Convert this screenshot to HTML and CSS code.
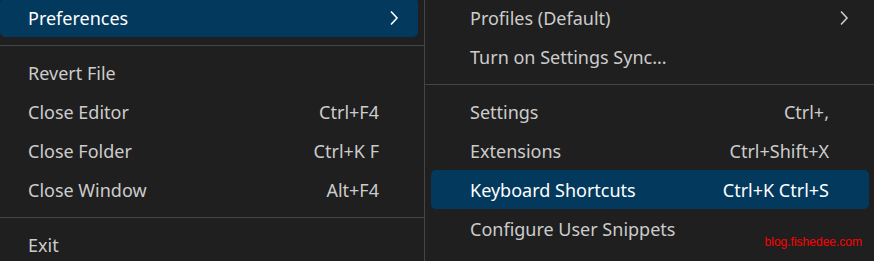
FILE: index.html
```html
<!DOCTYPE html>
<html lang="en">
<head>
    <meta charset="UTF-8">
    <title>Menu</title>
    <link rel="stylesheet" href="styles.css">
</head>
<body>
    <div class="menu menu-left">
        <div class="menu-item active">
            <span>Preferences</span>
            <svg class="chevron" viewBox="0 0 10 16"><polyline points="2,1.5 8,8 2,14.5"/></svg>
        </div>
        <div class="separator"></div>
        <div class="menu-item"><span>Revert File</span></div>
        <div class="menu-item"><span>Close Editor</span><span class="keys">Ctrl+F4</span></div>
        <div class="menu-item"><span>Close Folder</span><span class="keys">Ctrl+K F</span></div>
        <div class="menu-item"><span>Close Window</span><span class="keys">Alt+F4</span></div>
        <div class="separator"></div>
        <div class="menu-item"><span>Exit</span></div>
    </div>

    <div class="menu menu-right">
        <div class="menu-item">
            <span>Profiles (Default)</span>
            <svg class="chevron" viewBox="0 0 10 16"><polyline points="2,1.5 8,8 2,14.5"/></svg>
        </div>
        <div class="menu-item"><span>Turn on Settings Sync...</span></div>
        <div class="separator"></div>
        <div class="menu-item"><span>Settings</span><span class="keys">Ctrl+,</span></div>
        <div class="menu-item"><span>Extensions</span><span class="keys">Ctrl+Shift+X</span></div>
        <div class="menu-item active"><span>Keyboard Shortcuts</span><span class="keys">Ctrl+K Ctrl+S</span></div>
        <div class="menu-item"><span>Configure User Snippets</span></div>
        <div class="menu-item"><span>User Tasks</span></div>
    </div>

    <div class="watermark">blog.fishedee.com</div>
</body>
</html>
```

FILE: styles.css
```css
body {
    display: flex;
    margin: 0;
    height: 261px;
    overflow: hidden;
    background-color: #1f1f1f;
    font-family: "Noto Sans", "Open Sans", Arial, sans-serif;
    font-size: 18px;
    color: #cccccc;
}


.menu {
    display: flex;
    flex-direction: column;
    margin-top: -2px;
    padding: 0 6px;
    box-sizing: border-box;
}
.menu-left {
    width: 431px;
    margin-left: -6px;
    border-right: 1px solid #454545;
}
.menu-right {
    flex: 1;
    padding-right: 5px;
}


.menu-item {
    display: flex;
    justify-content: space-between;
    align-items: center;
    flex-shrink: 0;
    height: 39px;
    padding: 0 40px 0 39px;
    border-radius: 5px;
    white-space: nowrap;
}
.menu-left .menu-item {
    padding-left: 28px;
    padding-right: 39px;
}
.menu-item.active {
    background-color: #04395e;
    color: #ffffff;
}
.chevron {
    width: 10px;
    height: 16px;
    margin-right: -20px;
    fill: none;
    stroke: currentColor;
    stroke-width: 1.6;
}


.separator {
    flex-shrink: 0;
    height: 1px;
    margin: 7.5px -6px;
    background-color: #454545;
}


.watermark {
    position: absolute;
    right: 12px;
    top: 235px;
    font-family: "Liberation Sans", Arial, sans-serif;
    font-size: 12px;
    color: #ff0000;
}
```
